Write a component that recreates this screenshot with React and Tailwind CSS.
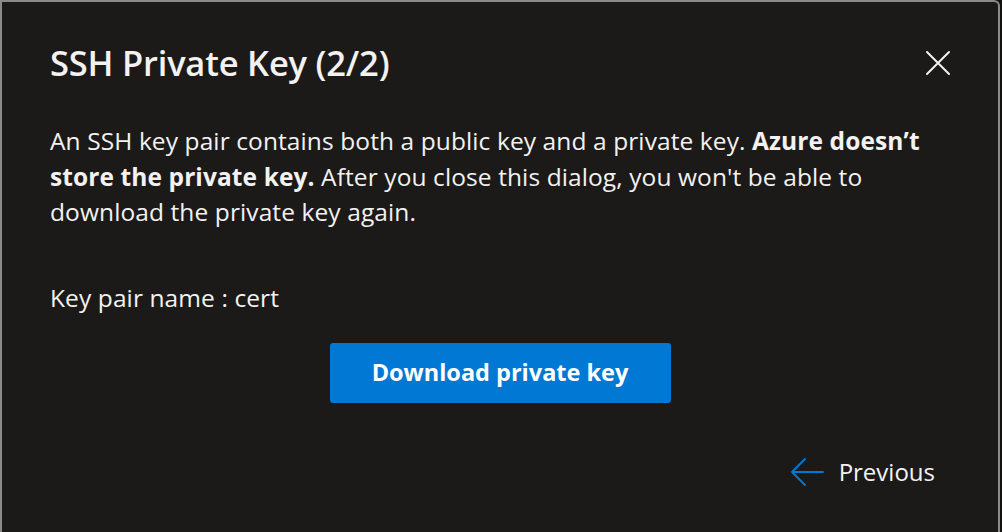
import React from "react";

export default function App() {
  return (
    <div className="w-[1002px] h-[532px] bg-[#111] overflow-hidden" style={{ fontFamily: '"Open Sans", "Noto Sans", sans-serif' }}>
      <div className="w-[1000px] h-[540px] bg-[#1b1a19] border-l-2 border-t-2 border-r-2 border-[#8a8a8a] rounded-tr-[6px] text-[#f3f2f1] flex flex-col">
        <div className="flex items-start justify-between pl-[48px] pr-[46px] pt-[37px]">
          <h1 className="text-[34.5px] leading-[48px] font-semibold tracking-[-0.2px]">SSH Private Key (2/2)</h1>
          <button className="w-[28px] h-[28px] mt-[10px] flex items-center justify-center text-[#f3f2f1]">
            <svg width="26" height="26" viewBox="0 0 26 26" fill="none" stroke="currentColor" strokeWidth="2" strokeLinecap="round">
              <path d="M2 2 L24 24 M24 2 L2 24" />
            </svg>
          </button>
        </div>
        <div className="pl-[48px] pr-[20px] mt-[36px] text-[24.5px] leading-[35.5px] tracking-[0.1px]">
          <p className="whitespace-nowrap">
            An SSH key pair contains both a public key and a private key. <b className="font-bold">Azure doesn’t</b>
            <br />
            <b className="font-bold">store the private key.</b> After you close this dialog, you won't be able to
            <br />
            download the private key again.
          </p>
          <p className="mt-[50px]">Key pair name : cert</p>
        </div>
        <div className="flex justify-center mt-[28px]">
          <button className="w-[341px] h-[60px] bg-[#0078d4] rounded-[3px] text-white text-[23.5px] font-bold">
            Download private key
          </button>
        </div>
        <div className="flex justify-end items-center pr-[63px] mt-[51px] gap-[15px]">
          <svg width="34" height="30" viewBox="0 0 34 30" fill="none" stroke="#0078d4" strokeWidth="2" strokeLinecap="round" strokeLinejoin="round">
            <path d="M33 15 H2 M15 2 L2 15 L15 28" />
          </svg>
          <span className="text-[24px] leading-[35px]">Previous</span>
        </div>
      </div>
    </div>
  );
}
